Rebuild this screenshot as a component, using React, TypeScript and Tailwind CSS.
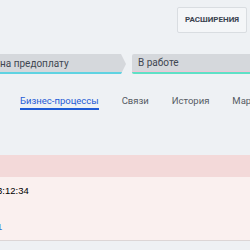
import React from 'react'

const tabs = ['Бизнес-процессы', 'Связи', 'История', 'Маркет']

const App: React.FC = () => {
  return (
    <div className="w-[250px] h-[250px] overflow-hidden bg-[#eef1f4] font-['Roboto',sans-serif] text-[#4a5059]">
      {/* Toolbar */}
      <div className="flex justify-end pt-[7px] h-[54px]">
        <button className="h-[26px] w-[70px] mr-[3px] flex items-center justify-center rounded-[2px] border border-[#d9dde1] bg-[#f4f6f8] text-[8px] font-bold text-[#3b4350] uppercase">
          Расширения
        </button>
      </div>

      {/* Stages */}
      <div className="flex h-[20px] gap-[6px] text-[10px] text-[#3f4752]">
        <div className="relative w-[128px] -ml-[2px] flex flex-col bg-[#d5d8dc] [clip-path:polygon(0_0,calc(100%-5px)_0,100%_50%,calc(100%-5px)_100%,0_100%)]">
          <div className="flex-1 flex items-center pl-[2px]">на предоплату</div>
          <div className="h-[2px] bg-[#5fd3e2]" />
        </div>
        <div className="flex-1 flex flex-col bg-[#d5d8dc] rounded-l-[2px] overflow-hidden -mr-[10px]">
          <div className="flex-1 flex items-center pl-[6px]">В работе</div>
          <div className="h-[1px] bg-[#f2c4d6]" />
          <div className="h-[2px] bg-[#5fe0c6]" />
        </div>
      </div>

      {/* Tabs */}
      <div className="flex gap-[23px] pl-[20px] mt-[20px] h-[61px] text-[9.5px] leading-[13px] whitespace-nowrap">
        {tabs.map((t, i) => (
          <div key={t} className="flex flex-col">
            <span className={i === 0 ? 'text-[#1f5bd6]' : 'text-[#555b63]'}>{t}</span>
            {i === 0 && <div className="h-[2px] mt-[1px] bg-[#1f5bd6]" />}
          </div>
        ))}
      </div>

      {/* Error block */}
      <div className="h-[22px] bg-[#f3d9d9]" />
      <div className="h-[64px] bg-[#faf0ef] border-b border-[#dcd6d6] font-['Liberation_Sans',sans-serif] text-[9.5px] text-black">
        <div className="pt-[8px] -ml-[3px] leading-[11px]">3:12:34</div>
        <div className="mt-[25px] -ml-[3px] leading-[11px] text-[#2f6fd0]">1</div>
      </div>
    </div>
  )
}

export default App
